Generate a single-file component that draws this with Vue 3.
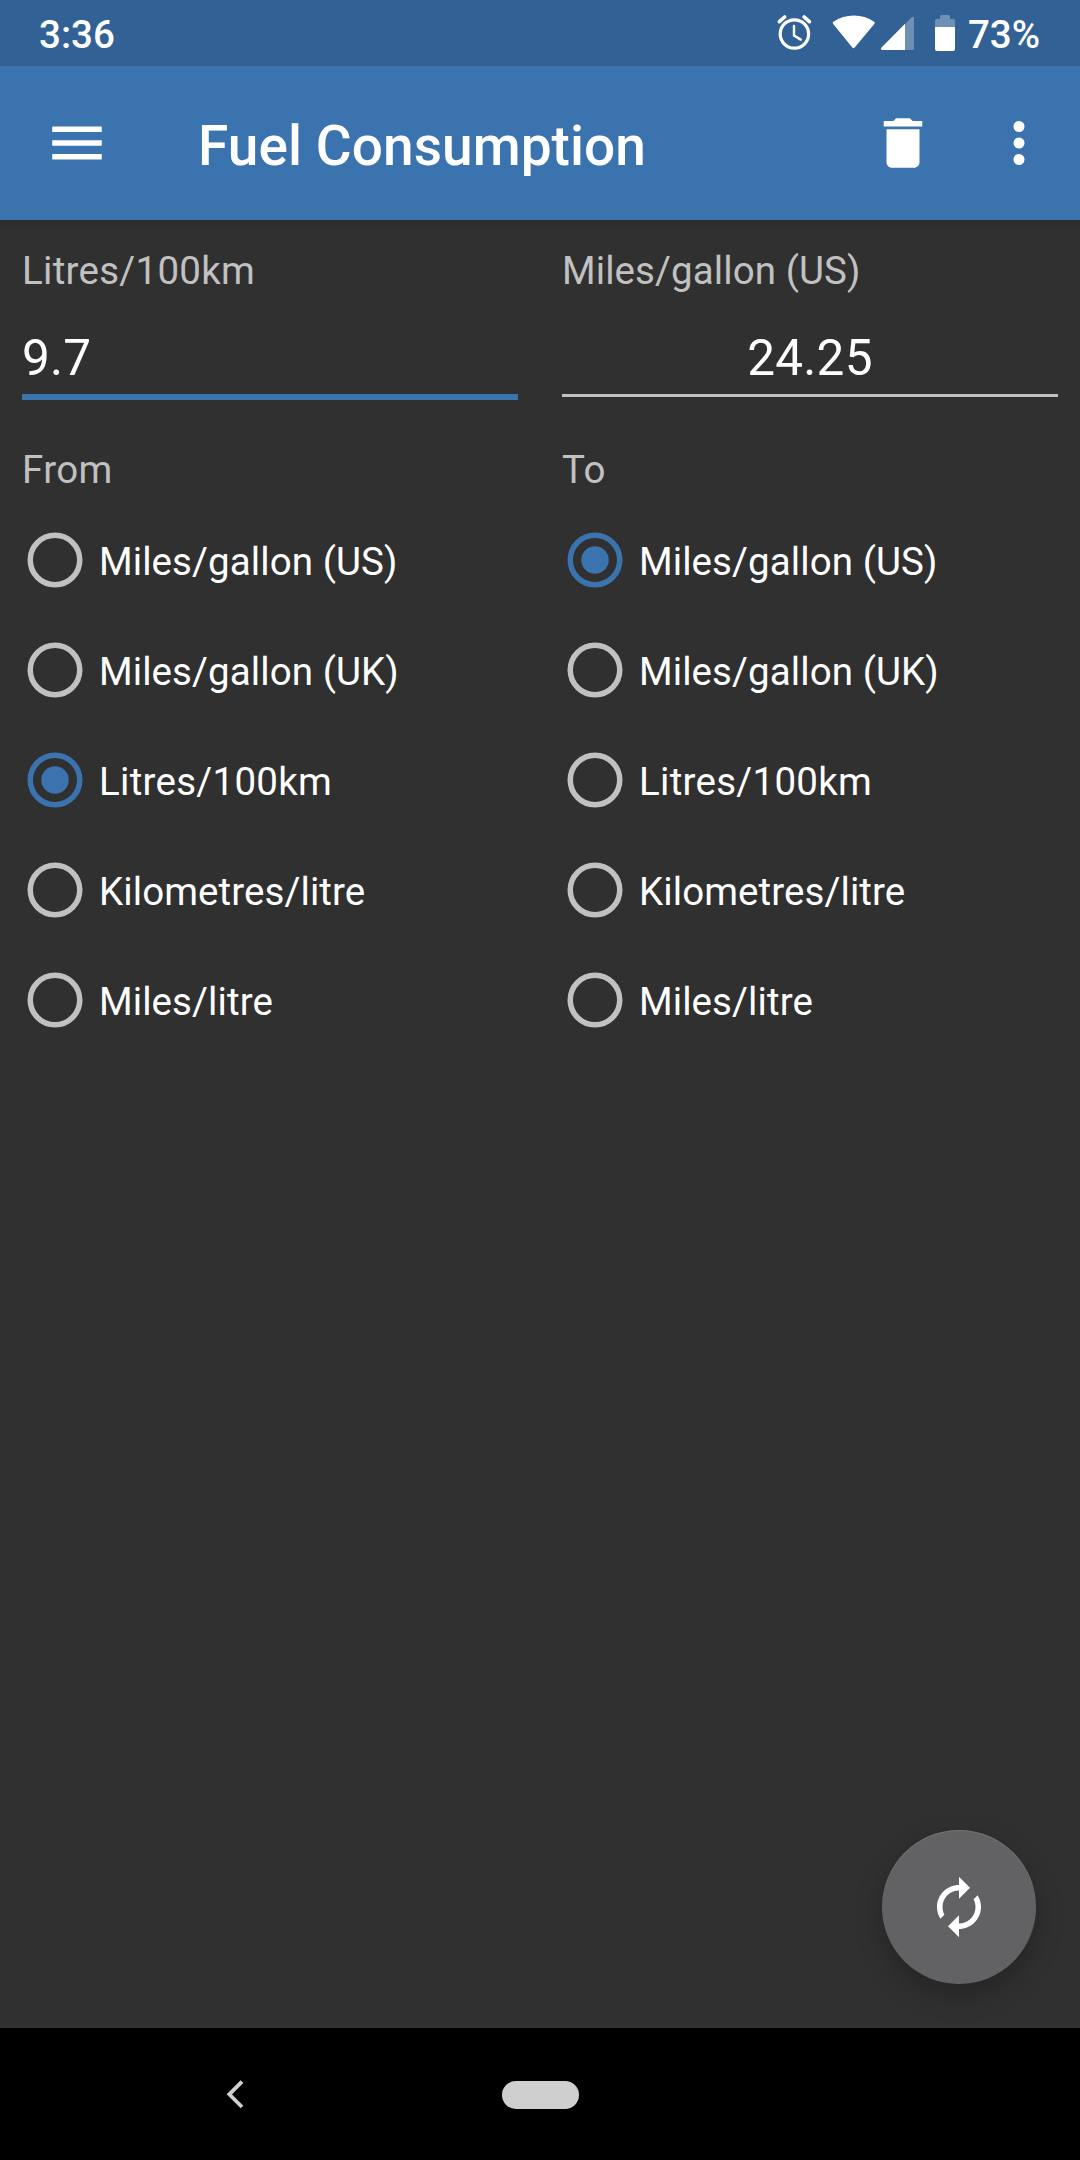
<script setup>
import { ref } from 'vue'

const units = ['Miles/gallon (US)', 'Miles/gallon (UK)', 'Litres/100km', 'Kilometres/litre', 'Miles/litre']
const columns = ref([
  { title: 'From', value: '9.7', selected: 2, active: true },
  { title: 'To', value: '24.25', selected: 0, active: false },
])

const hasDigits = (text) => /\d/.test(text)
</script>

<template>
  <div class="screen">
    <header class="status">
      <span class="clock">3:36</span>
      <div class="indicators">
        <svg class="alarm" width="36" height="40" viewBox="0 0 36 40" fill="none" stroke="#fff">
          <circle cx="17.4" cy="22" r="14.2" stroke-width="3.2" />
          <path d="M17 14v9.5l6.8 4.1" stroke-width="2.4" stroke-linecap="round" />
          <path d="M2.4 9.7 7.6 5M32.4 9.7 27.2 5" stroke-width="3.6" stroke-linecap="round" />
        </svg>
        <svg class="wifi" width="44" height="40" viewBox="0 0 44 40">
          <path d="M1.2 12.1Q0 10.7 1.4 9.8C7.5 5.6 14.5 3.5 21.9 3.5S36.3 5.6 42.1 9.8Q43.5 10.7 42.3 12.1L22.7 35.6Q21.5 36.9 20.3 35.6Z" fill="#fff" />
        </svg>
        <svg class="signal" width="35" height="40" viewBox="0 0 35 40">
          <path d="M25 12.2 31.3 5.6Q34 3.8 34 6.3V36.3Q34 38 32.3 38H25Z" fill="#fff" fill-opacity=".3" />
          <path d="M25 11.7V38H1.8Q0 37.4 1.3 35.8Z" fill="#fff" />
        </svg>
        <svg class="battery" width="22" height="40" viewBox="0 0 22 40">
          <path d="M1 15V8.5Q1 7 2.5 7H6V4.5Q6 3 7.5 3H14.5Q16 3 16 4.5V7H19.5Q21 7 21 8.5V15Z" fill="#fff" fill-opacity=".3" />
          <path d="M1 15H21V37Q21 39 19 39H3Q1 39 1 37Z" fill="#fff" />
        </svg>
        <span>73%</span>
      </div>
    </header>

    <nav class="appbar">
      <svg class="icon" viewBox="0 0 24 24"><path d="M3 18h18v-2H3v2zm0-5h18v-2H3v2zm0-7v2h18V6H3z" /></svg>
      <h1>Fuel Consumption</h1>
      <svg class="icon" viewBox="0 0 24 24"><path d="M6 19c0 1.1.9 2 2 2h8c1.1 0 2-.9 2-2V7H6v12zM19 4h-3.5l-1-1h-5l-1 1H5v2h14V4z" /></svg>
      <svg class="icon more" viewBox="0 0 24 24">
        <circle cx="12" cy="6" r="2" /><circle cx="12" cy="12" r="2" /><circle cx="12" cy="18" r="2" />
      </svg>
    </nav>

    <main class="content">
      <section v-for="column in columns" :key="column.title" class="column">
        <div class="label" :class="{ wide: hasDigits(units[column.selected]) }">{{ units[column.selected] }}</div>
        <div class="field" :class="{ active: column.active }">{{ column.value }}</div>
        <div class="label group-title">{{ column.title }}</div>
        <div
          v-for="(unit, index) in units"
          :key="unit"
          class="option"
          :class="{ checked: index === column.selected }"
          @click="column.selected = index"
        >
          <svg class="radio" width="66" height="66" viewBox="0 0 24 24">
            <circle cx="12" cy="12" r="9" fill="none" stroke="currentColor" stroke-width="2" />
            <circle v-if="index === column.selected" cx="12" cy="12" r="5" fill="currentColor" />
          </svg>
          <span :class="{ wide: hasDigits(unit) }">{{ unit }}</span>
        </div>
      </section>

      <button class="fab" aria-label="Convert">
        <svg class="icon" viewBox="0 0 24 24"><path d="M12 6v3l4-4-4-4v3c-4.42 0-8 3.58-8 8 0 1.57.46 3.03 1.24 4.26L6.7 14.8c-.45-.83-.7-1.79-.7-2.8 0-3.31 2.69-6 6-6zm6.76 1.74L17.3 9.2c.44.84.7 1.79.7 2.8 0 3.31-2.69 6-6 6v-3l-4 4 4 4v-3c4.42 0 8-3.58 8-8 0-1.57-.46-3.03-1.24-4.26z" /></svg>
      </button>
    </main>

    <footer class="navigation">
      <svg class="back" width="20" height="30" viewBox="0 0 20 30" fill="none" stroke="#cfcfcf" stroke-width="3.8">
        <path d="M16 2.6 3.3 15.3 16 28" />
      </svg>
      <span class="home"></span>
    </footer>
  </div>
</template>

<style>
body {
  margin: 0;
  background: #303030;
}
</style>

<style scoped>
.screen {
  display: flex;
  flex-direction: column;
  width: 1080px;
  height: 2160px;
  overflow: hidden;
  background: #303030;
  color: #fff;
  font-family: Roboto, sans-serif;
  font-size: 38.5px;
}
svg {
  display: block;
  flex: none;
}
.status {
  display: flex;
  justify-content: space-between;
  box-sizing: border-box;
  height: 66px;
  padding: 0 40px 0 39px;
  background: #316195;
  font-weight: 500;
  line-height: 70px;
}
.indicators {
  display: flex;
}
.indicators svg {
  margin-top: 12px;
}
.alarm {
  margin-right: 19px;
}
.wifi {
  margin-right: 4px;
}
.signal {
  margin-right: 19px;
}
.battery {
  margin-right: 12px;
}
.appbar {
  display: flex;
  align-items: center;
  box-sizing: border-box;
  height: 154px;
  padding: 0 28px 0 44px;
  background: #3b73af;
}
.icon {
  width: 66px;
  height: 66px;
  fill: #fff;
}
h1 {
  flex: 1;
  margin: 5px 0 0 88px;
  font-size: 55px;
  font-weight: 500;
  line-height: 66px;
  letter-spacing: 0.06px;
}
.more {
  margin-left: 50px;
}
.content {
  position: relative;
  display: flex;
  flex: 1;
  gap: 44px;
  padding: 0 22px;
  background: linear-gradient(#2d2d2d, #303030 12px);
}
.column {
  flex: 1;
}
.label {
  margin-top: 25px;
  color: #c1c1c1;
  line-height: 52px;
  letter-spacing: 0.09px;
}
.field {
  box-sizing: border-box;
  height: 100px;
  padding-top: 32px;
  border-bottom: 3px solid #c1c1c1;
  text-align: center;
  font-size: 49.5px;
  line-height: 58px;
  letter-spacing: 0.2px;
}
.field.active {
  text-align: left;
  box-shadow: 0 3px #3b73af;
  border-color: #3b73af;
}
.group-title {
  margin-top: 47px;
  margin-bottom: 9px;
  letter-spacing: 0.4px;
}
.option {
  display: flex;
  align-items: center;
  height: 110px;
}
.option span {
  margin: 3px 0 0 11px;
  letter-spacing: 0.09px;
}
.label.wide,
.option .wide {
  letter-spacing: 0.28px;
}
.radio {
  color: #c1c1c1;
}
.checked .radio {
  color: #3b73af;
}
.fab {
  position: absolute;
  right: 44px;
  bottom: 44px;
  display: grid;
  place-items: center;
  width: 154px;
  height: 154px;
  padding: 0;
  border: 0;
  border-radius: 50%;
  background: #626264;
  box-shadow: 0 11px 28px rgba(0, 0, 0, 0.24), inset 0 1px 1px rgba(255, 255, 255, 0.12);
}
.navigation {
  display: flex;
  align-items: center;
  height: 132px;
  background: #000;
}
.back {
  margin-left: 226px;
}
.home {
  width: 77px;
  height: 28px;
  margin: 1px 0 0 256px;
  border-radius: 14px;
  background: #cfcfcf;
}
</style>
